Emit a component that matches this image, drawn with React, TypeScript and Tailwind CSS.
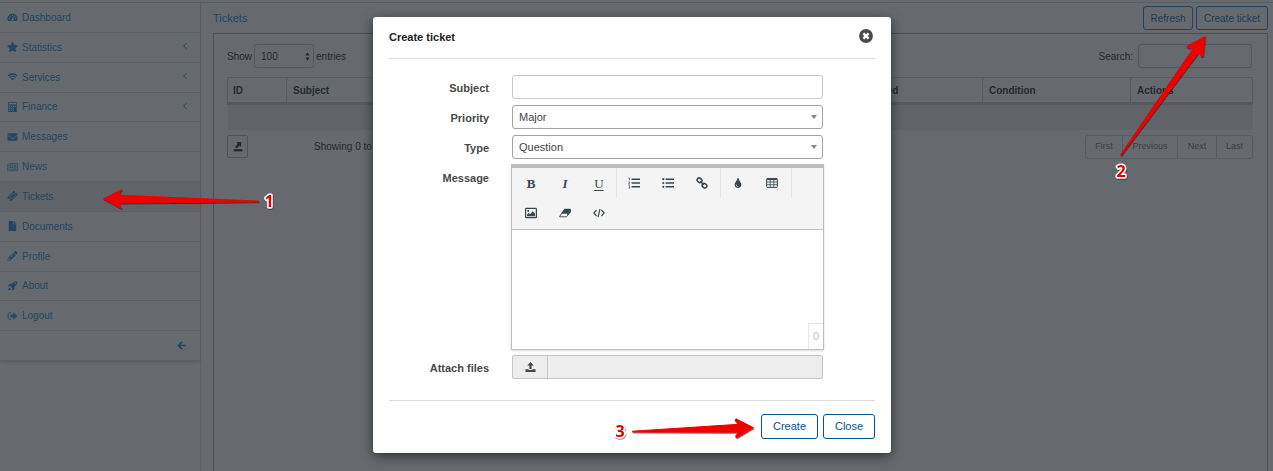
import React from "react";
import {
  FaStar,
  FaEnvelope,
  FaFile,
  FaPencilAlt,
  FaTint,
} from "react-icons/fa";

type IconProps = { className?: string };

function GaugeIcon({ className }: IconProps) {
  return (
    <svg viewBox="0 0 14 14" className={className} aria-hidden="true">
      <path d="M7 2a7 7 0 0 1 5.900 10.700H1.100A7 7 0 0 1 7 2z" fill="currentColor" />
      <g fill="#666a6f">
        <circle cx="2.600" cy="9" r=".95" />
        <circle cx="4" cy="5.800" r=".95" />
        <circle cx="7" cy="4.300" r=".95" />
        <circle cx="10.200" cy="5.800" r=".95" />
        <circle cx="11.500" cy="9" r=".95" />
        <path d="M7.700 5.800 8.500 6 8 9a1.600 1.600 0 1 1-1-.2z" />
      </g>
    </svg>
  );
}

function WifiIcon({ className }: IconProps) {
  return (
    <svg viewBox="0 0 14 14" className={className} fill="none" stroke="currentColor" strokeWidth="1.800" aria-hidden="true">
      <path d="M.6 5.400a9.200 9.200 0 0 1 12.800 0M2.800 7.800a6 6 0 0 1 8.400 0" />
      <path d="M4.600 9.600a3.500 3.500 0 0 1 4.800 0L7 12z" fill="currentColor" stroke="none" />
    </svg>
  );
}

function CalculatorIcon({ className }: IconProps) {
  return (
    <svg viewBox="0 0 14 14" className={className} aria-hidden="true">
      <path d="M1 0h12v14H1z" fill="currentColor" />
      <g fill="#666a6f">
        <path d="M2 1.200h10v2.300H2z" />
        <path d="M2 5.300h1.600v1.600H2zM4.800 5.300h1.600v1.600H4.800zM7.600 5.300h1.600v1.600H7.600zM10.400 5.300H12v1.600h-1.600zM2 8.200h1.600v1.600H2zM4.800 8.200h1.600v1.600H4.800zM7.600 8.200h1.600v1.600H7.600zM2 11.100h1.600v1.600H2zM4.800 11.100h1.600v1.600H4.800zM7.600 11.100h1.600v1.600H7.600z" />
      </g>
    </svg>
  );
}

function NewsIcon({ className }: IconProps) {
  return (
    <svg viewBox="0 0 16 14" className={className} fill="none" stroke="currentColor" aria-hidden="true">
      <path d="M3 2h12.400v9.500a1 1 0 0 1-1 1H1.700a1.200 1.200 0 0 1-1.200-1.200V3.500H3v7.800" />
      <rect x="5" y="4.200" width="3.600" height="3.600" />
      <path d="M10 4.300h4M10 6.300h4M10 8.300h4M4.500 10.300H14" />
    </svg>
  );
}

function TicketIcon({ className }: IconProps) {
  return (
    <svg viewBox="0 0 14 14" className={className} aria-hidden="true">
      <g transform="rotate(-45 7 7)">
        <path d="M0 3.400h14v2.100a1.500 1.500 0 0 0 0 3v2.100H0V8.500a1.500 1.500 0 0 0 0-3z" fill="currentColor" />
        <path d="M3.300 5h7.400v4H3.300z" fill="none" stroke="#606469" strokeWidth=".9" />
      </g>
    </svg>
  );
}

function RocketIcon({ className }: IconProps) {
  return (
    <svg viewBox="0 0 14 14" className={className} aria-hidden="true">
      <path d="M13.800.2c.1 3.300-.9 5.400-3.500 7.800l-.2 3.200-3.200 2.100-.6-.5.500-2.700-2.900-2.900-2.700.5-.5-.6 2.100-3.200L6 3.700C8.400 1.100 10.500.1 13.800.2z" fill="currentColor" />
      <path d="M1.800 9.800c1.600-.6 3 .8 2.400 2.400L.7 13.300z" fill="currentColor" />
      <circle cx="10.900" cy="3.100" r=".9" fill="#666a6f" />
    </svg>
  );
}

function SignOutIcon({ className }: IconProps) {
  return (
    <svg viewBox="0 0 14 14" className={className} fill="currentColor" aria-hidden="true">
      <path d="M5 2.600H2.200A1.200 1.200 0 0 0 1 3.800v6.400a1.200 1.200 0 0 0 1.200 1.200H5" fill="none" stroke="currentColor" strokeWidth="1.300" />
      <path d="M8.300 1.900 13.500 7l-5.200 5.100V9H4.200V5h4.100z" />
    </svg>
  );
}

function BackIcon({ className }: IconProps) {
  return (
    <svg viewBox="0 0 12 12" className={className} fill="none" stroke="currentColor" strokeWidth="2.200" aria-hidden="true">
      <path d="M6.600 1.200 1.900 6l4.700 4.800M2 6h9.700" />
    </svg>
  );
}

function ChevronIcon({ className }: IconProps) {
  return (
    <svg viewBox="0 0 8 8" className={className} fill="none" stroke="currentColor" strokeWidth="1" aria-hidden="true">
      <path d="M5.500 1.200 2.700 4l2.800 2.800" />
    </svg>
  );
}

function ExportIcon({ className }: IconProps) {
  return (
    <svg viewBox="0 0 12 12" className={className} fill="currentColor" aria-hidden="true">
      <path d="M3.800 0h6v6L8 4.300 4.600 7.700 2.500 5.600 5.700 2z" />
      <path d="M.8 8.600h10.400v2.600H.8z" />
    </svg>
  );
}

function UploadIcon({ className }: IconProps) {
  return (
    <svg viewBox="0 0 12 12" className={className} fill="currentColor" aria-hidden="true">
      <path d="M6 0 9.600 3.900H7.200V7.600H4.800V3.900H2.400z" />
      <path d="M.5 8H4v.8h4V8h3.500v3H.5z" />
    </svg>
  );
}

function CloseCircleIcon({ className }: IconProps) {
  return (
    <svg viewBox="0 0 14 14" className={className} aria-hidden="true">
      <circle cx="7" cy="7" r="6.900" fill="#4a4a4a" />
      <path d="M4.400 4.400l5.200 5.200M9.600 4.400 4.400 9.600" stroke="#fff" strokeWidth="2.300" />
    </svg>
  );
}

function OrderedListIcon({ className }: IconProps) {
  return (
    <svg viewBox="0 0 12 12" className={className} aria-hidden="true">
      <path d="M3.600 2.200H12M3.600 6H12M3.600 9.800H12" stroke="currentColor" strokeWidth="1.500" />
      <path d="M.5 1.200 1.400.8v2.500M.4 5h1.300v.9L.5 7.100h1.500M.4 8.700h1.400L1.200 9.800l.6.300v1H.4" fill="none" stroke="currentColor" strokeWidth=".7" />
    </svg>
  );
}

function BulletListIcon({ className }: IconProps) {
  return (
    <svg viewBox="0 0 12 12" className={className} fill="currentColor" aria-hidden="true">
      <path d="M3.600 2.200H12M3.600 6H12M3.600 9.800H12" stroke="currentColor" strokeWidth="1.500" />
      <circle cx="1.300" cy="2.200" r="1.100" />
      <circle cx="1.300" cy="6" r="1.100" />
      <circle cx="1.300" cy="9.800" r="1.100" />
    </svg>
  );
}

function LinkIcon({ className }: IconProps) {
  return (
    <svg viewBox="0 0 12 12" className={className} fill="none" stroke="currentColor" strokeWidth="1.500" aria-hidden="true">
      <rect x="1" y="1.300" width="5" height="4" rx="2" transform="rotate(40 3.500 3.300)" />
      <rect x="6" y="6.700" width="5" height="4" rx="2" transform="rotate(40 8.500 8.700)" />
      <path d="M4.200 4.200l3.600 3.600" />
    </svg>
  );
}

function TableIcon({ className }: IconProps) {
  return (
    <svg viewBox="0 0 12 12" className={className} fill="none" stroke="currentColor" aria-hidden="true">
      <rect x=".7" y="1.600" width="10.600" height="8.800" rx=".7" />
      <path d="M.7 2.300h10.600" strokeWidth="1.500" />
      <path d="M.7 5h10.600M.7 7.700h10.600M4.200 2v8.400M7.800 2v8.400" strokeWidth=".8" />
    </svg>
  );
}

function ImageIcon({ className }: IconProps) {
  return (
    <svg viewBox="0 0 12 12" className={className} aria-hidden="true">
      <rect x=".6" y="1.400" width="10.800" height="9.200" rx=".6" fill="none" stroke="currentColor" strokeWidth="1.200" />
      <circle cx="3.200" cy="4" r="1" fill="currentColor" />
      <path d="M2 9.300V7.600l1.800-1.500 1.300 1.200 2.700-3.100L10 6.600v2.700z" fill="currentColor" />
    </svg>
  );
}

function EraserIcon({ className }: IconProps) {
  return (
    <svg viewBox="0 0 12 12" className={className} aria-hidden="true">
      <path d="M5.400 1.800H12L9.200 6H2.400z" fill="currentColor" />
      <path d="M2.500 6.300h6.400L11.700 2.600v2.100L7.500 9.800H.6z" fill="none" stroke="currentColor" strokeWidth=".9" strokeLinejoin="round" />
      <path d="M11.700 2.300v2.400L8.300 8.900V6.500z" fill="currentColor" />
    </svg>
  );
}

function CodeIcon({ className }: IconProps) {
  return (
    <svg viewBox="0 0 12 12" className={className} fill="none" stroke="currentColor" strokeWidth="1.100" aria-hidden="true">
      <path d="M3.600 3 .8 6l2.800 3M8.400 3l2.800 3-2.800 3M7 2 5 10" />
    </svg>
  );
}

const menu = [
  { label: "Dashboard", Icon: GaugeIcon },
  { label: "Statistics", Icon: FaStar, nested: true },
  { label: "Services", Icon: WifiIcon, nested: true },
  { label: "Finance", Icon: CalculatorIcon, nested: true },
  { label: "Messages", Icon: FaEnvelope },
  { label: "News", Icon: NewsIcon },
  { label: "Tickets", Icon: TicketIcon, active: true },
  { label: "Documents", Icon: FaFile },
  { label: "Profile", Icon: FaPencilAlt },
  { label: "About", Icon: RocketIcon },
  { label: "Logout", Icon: SignOutIcon },
];

function Sidebar() {
  return (
    <aside className="w-[201px] shrink-0 border-r border-[#5d6166]">
      <nav className="grid h-[358px] auto-rows-fr text-[#244660] shadow-sm">
        {menu.map(({ label, Icon, nested, active }) => (
          <a
            key={label}
            href="#"
            className={
              active
                ? "flex items-center gap-1 border-b border-[#5c6065] bg-[#606469] pr-[11px] pl-[7px]"
                : "flex items-center gap-1 border-b border-[#5c6065] bg-[#666a6f] pr-[11px] pl-[7px]"
            }
          >
            <Icon className="h-[10px] w-[11px]" />
            <span className="flex-1">{label}</span>
            {nested && <ChevronIcon className="mb-[2px] size-2" />}
          </a>
        ))}
        <button type="button" aria-label="Collapse menu" className="flex items-center justify-end border-b border-[#5c6065] bg-[#666a6f] pr-[14px]">
          <BackIcon className="size-[9px]" />
        </button>
      </nav>
    </aside>
  );
}

function TicketList() {
  return (
    <main className="flex min-w-0 flex-1 flex-col pr-[5px] pl-3">
      <header className="flex h-[30px] items-center justify-between">
        <h1 className="text-[11px] text-[#244660]">Tickets</h1>
        <div className="flex gap-[3px] text-[#1c3d58]">
          <button type="button" className="h-6 w-[50px] rounded-[3px] border border-[#1f4260]">Refresh</button>
          <button type="button" className="h-6 w-[72px] rounded-[3px] border border-[#1f4260] whitespace-nowrap">Create ticket</button>
        </div>
      </header>
      <section className="flex-1 border border-b-0 border-[#4d5155] pt-[10px] pr-[14px] pl-[13px]">
        <div className="flex items-center justify-between pr-px">
          <div className="flex items-center gap-[2px]">
            <label htmlFor="page-size">Show</label>
            <div className="grid items-center">
              <select id="page-size" defaultValue="100" className="col-start-1 row-start-1 h-6 w-[60px] appearance-none rounded-[3px] border border-[#53575b] bg-transparent pl-[6px]">
                <option>100</option>
              </select>
              <svg viewBox="0 0 6 10" className="pointer-events-none col-start-1 row-start-1 mr-[4px] h-[9px] w-[5px] justify-self-end" fill="currentColor" aria-hidden="true">
                <path d="M3 0 5.500 3.800H.5zM3 10 .5 6.200h5z" />
              </svg>
            </div>
            <label htmlFor="page-size">entries</label>
          </div>
          <div className="flex items-center gap-[5px]">
            <label htmlFor="search">Search:</label>
            <input id="search" type="text" className="h-6 w-[114px] rounded-[3px] border border-[#53575b] bg-transparent px-2" />
          </div>
        </div>
        <table className="mt-[9px] w-full table-fixed border-collapse text-left">
          <thead>
            <tr className="h-[26px] border border-b-[3px] border-[#575b5f]">
              <th className="w-[59px] pl-[5px]">ID</th>
              <th className="border-l border-[#575b5f] pl-[6px]">Subject</th>
              <th className="w-[128px] border-l border-[#575b5f] pl-[6px]">Created</th>
              <th className="w-[148px] border-l border-[#575b5f] pl-[6px]">Condition</th>
              <th className="w-[122px] border-l border-[#575b5f] pl-[6px]">Actions</th>
            </tr>
          </thead>
          <tbody>
            <tr className="h-[26px] bg-[#606469]">
              <td colSpan={5} />
            </tr>
          </tbody>
        </table>
        <div className="mt-[5px] flex items-center">
          <button type="button" aria-label="Export" className="flex h-[23px] w-[21px] items-center justify-center rounded-[2px] border border-[#505458]">
            <ExportIcon className="size-[10px]" />
          </button>
          <p className="ml-[66px] flex-1">Showing 0 to 0 of 0 entries</p>
          <div className="flex rounded-[3px] border border-[#585c60] text-[9px] text-[#3a3e42]">
            <button type="button" className="h-[22px] w-9">First</button>
            <button type="button" className="h-[22px] w-[55px] border-l border-[#585c60]">Previous</button>
            <button type="button" className="h-[22px] w-[39px] border-l border-[#585c60]">Next</button>
            <button type="button" className="h-[22px] w-9 border-l border-[#585c60]">Last</button>
          </div>
        </div>
      </section>
    </main>
  );
}

function Row({ label, id, children }: { label: string; id: string; children: React.ReactNode }) {
  return (
    <div className="grid grid-cols-[100px_1fr] gap-x-[23px]">
      <label htmlFor={id} className="pt-[5px] text-right leading-4 font-bold text-[#484848]">{label}</label>
      <div className="min-w-0">{children}</div>
    </div>
  );
}

function SelectField({ id, value }: { id: string; value: string }) {
  return (
    <div className="grid items-center">
      <select id={id} defaultValue={value} className="col-start-1 row-start-1 h-6 w-full appearance-none rounded-[3px] border border-[#a3a3a3] bg-white pl-[6px] text-[#444]">
        <option>{value}</option>
      </select>
      <svg viewBox="0 0 6 4" className="pointer-events-none col-start-1 row-start-1 mr-[6px] h-1 w-[6px] justify-self-end" aria-hidden="true">
        <path d="M0 0h6L3 4z" fill="#888" />
      </svg>
    </div>
  );
}

function Tool({ label, children }: { label: string; children: React.ReactNode }) {
  return (
    <button type="button" aria-label={label} className="flex h-[30px] w-[34px] items-center justify-center">
      {children}
    </button>
  );
}

function Editor() {
  return (
    <div className="-m-px border border-t-4 border-[#bdbdbd] shadow-sm">
      <div className="flex h-[62px] flex-wrap content-start border-b border-[#bdbdbd] bg-[#f4f4f4] pl-[2px] text-[#36474f]">
        <div className="flex border-r border-[#e6e6e6] font-['Liberation_Serif',serif] text-[13px]">
          <Tool label="Bold"><b>B</b></Tool>
          <Tool label="Italic"><b className="italic">I</b></Tool>
          <Tool label="Underline"><span className="underline underline-offset-2">U</span></Tool>
        </div>
        <div className="flex border-r border-[#e6e6e6] pr-px">
          <Tool label="Ordered list"><OrderedListIcon className="size-3" /></Tool>
          <Tool label="Unordered list"><BulletListIcon className="size-3" /></Tool>
          <Tool label="Link"><LinkIcon className="size-3" /></Tool>
        </div>
        <div className="flex border-r border-[#e6e6e6] pr-[2px]">
          <Tool label="Colour"><FaTint className="size-[10px]" /></Tool>
          <Tool label="Table"><TableIcon className="size-3" /></Tool>
        </div>
        <div className="flex w-full">
          <Tool label="Image"><ImageIcon className="size-3" /></Tool>
          <Tool label="Clear formatting"><EraserIcon className="size-3" /></Tool>
          <Tool label="Code view"><CodeIcon className="size-3" /></Tool>
        </div>
      </div>
      <div className="relative">
        <textarea id="message" className="block h-[119px] w-full resize-none bg-white p-2" />
        <span className="absolute right-0 bottom-0 flex h-[26px] w-[15px] items-center justify-center border-t border-l border-[#e6e6e6] text-[#bbb]">0</span>
      </div>
    </div>
  );
}

function CreateTicketDialog() {
  return (
    <div role="dialog" aria-labelledby="dialog-title" className="w-[518px] rounded-[3px] bg-white px-4 pb-[14px] text-[11px] shadow-[0_3px_12px_rgba(0,0,0,0.55)]">
      <header className="flex h-[42px] items-center justify-between border-b border-[#ddd]">
        <h2 id="dialog-title" className="font-bold text-[#222]">Create ticket</h2>
        <button type="button" aria-label="Close dialog" className="mr-[2px] mb-[3px]">
          <CloseCircleIcon className="size-[14px]" />
        </button>
      </header>
      <form className="pt-4 pr-[52px]">
        <div className="flex flex-col gap-[6px]">
          <Row label="Subject" id="subject">
            <input id="subject" type="text" className="block h-6 w-full rounded-[3px] border border-[#c8c8c8] px-2" />
          </Row>
          <Row label="Priority" id="priority"><SelectField id="priority" value="Major" /></Row>
          <Row label="Type" id="type"><SelectField id="type" value="Question" /></Row>
          <Row label="Message" id="message"><Editor /></Row>
          <Row label="Attach files" id="attachment">
            <div className="flex h-6 rounded-[2px] border border-[#c4c4c4] bg-[#ededed]">
              <button type="button" aria-label="Upload" className="flex w-[35px] items-center justify-center border-r border-[#c4c4c4] text-[#484848]">
                <UploadIcon className="size-[11px]" />
              </button>
              <input id="attachment" type="text" readOnly className="min-w-0 flex-1 bg-transparent px-2" />
            </div>
          </Row>
        </div>
      </form>
      <footer className="mt-[21px] flex justify-end gap-[5px] border-t border-[#ddd] pt-[13px] text-[#04538f]">
        <button type="button" className="h-[25px] w-[57px] rounded-[3px] border border-[#04538f]">Create</button>
        <button type="button" className="h-[25px] w-[52px] rounded-[3px] border border-[#04538f]">Close</button>
      </footer>
    </div>
  );
}

function StepMarkers() {
  return (
    <svg className="pointer-events-none absolute inset-0 h-full w-full" aria-hidden="true">
      <defs>
        <filter id="marker-shadow" x="-10%" y="-20%" width="120%" height="150%">
          <feDropShadow dx="0.500" dy="1" stdDeviation="0.700" floodColor="#000" floodOpacity="0.6" />
        </filter>
      </defs>
      <g fill="#ee0404" stroke="#ee0404" strokeLinejoin="round" strokeWidth="1" filter="url(#marker-shadow)">
        <path d="M103.500 198.700 121.500 189.700 118.500 195.200 258.500 201 258.500 201.700 118.500 203 121.500 208.500z" />
        <path d="M1205 36.500 1187 46.200 1187.500 48 1193.800 47.500 1120.500 154.700 1121.200 155.200 1199.500 51.300 1201.300 56.500 1202.800 56.300z" />
        <path d="M753.500 427.700 736 418.800 735 420.200 738.500 424.300 632.500 431.200 632.500 431.900 738.500 432.200 735.500 436.300 736.800 437.800z" />
      </g>
      <g
        className="font-['Open_Sans',sans-serif] text-[16px] font-bold"
        fill="#e00505"
        stroke="#fff"
        strokeWidth="3"
        strokeLinejoin="round"
        paintOrder="stroke"
        textAnchor="middle"
        filter="url(#marker-shadow)"
      >
        <text x="269" y="207">1</text>
        <text x="1121" y="177">2</text>
        <text x="620" y="437">3</text>
      </g>
    </svg>
  );
}

export default function App() {
  return (
    <div className="relative flex min-h-screen flex-col overflow-hidden bg-[#666a6f] font-['Liberation_Sans',Arial,sans-serif] text-[10px] leading-[15px] text-[#25292d]">
      <div className="h-[3px] border-b border-[#5a5e62] bg-[#666a6f]" />
      <div className="flex flex-1">
        <Sidebar />
        <TicketList />
      </div>
      <div className="absolute inset-0 flex items-start justify-center pt-[17px] pr-[9px]">
        <CreateTicketDialog />
      </div>
      <StepMarkers />
    </div>
  );
}
